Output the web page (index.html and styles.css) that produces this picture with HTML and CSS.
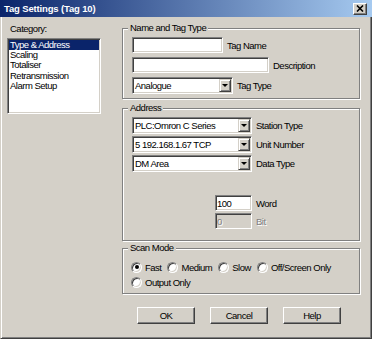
FILE: index.html
```html
<!DOCTYPE html>
<html lang="en">
<head>
  <meta charset="UTF-8"/>
  <meta name="viewport" content="width=device-width, initial-scale=1.0"/>
  <title>Tag Settings</title>
  <link rel="stylesheet" href="styles.css">
</head>
<body>

  <div class="window">

    <!-- title bar -->
    <div class="titlebar">
      <span class="title">Tag Settings (Tag 10)</span>
      <button class="close" type="button">
        <svg width="8" height="7" viewBox="0 0 8 7"><path d="M1 0.5 L7 6.5 M7 0.5 L1 6.5" stroke="#000" stroke-width="1.6" fill="none"/></svg>
      </button>
    </div>

    <div class="frame">

      <!-- left: category list -->
      <div class="category">
        <div class="category-label">Category:</div>
        <ul class="listbox">
          <li class="selected">Type &amp; Address</li>
          <li>Scaling</li>
          <li>Totaliser</li>
          <li>Retransmission</li>
          <li>Alarm Setup</li>
        </ul>
      </div>

      <!-- right: settings page -->
      <div class="panel">

        <fieldset class="group group-name">
          <legend>Name and Tag Type</legend>
          <div class="rows">
            <div class="row">
              <input class="edit edit-name" type="text" value="">
              <span>Tag Name</span>
            </div>
            <div class="row">
              <input class="edit edit-desc" type="text" value="">
              <span>Description</span>
            </div>
            <div class="row">
              <div class="combo combo-type"><span class="combo-text">Analogue</span><span class="combo-arrow"></span></div>
              <span>Tag Type</span>
            </div>
          </div>
        </fieldset>

        <fieldset class="group group-address">
          <legend>Address</legend>
          <div class="rows tight">
            <div class="row">
              <div class="combo combo-wide"><span class="combo-text">PLC:Omron C Series</span><span class="combo-arrow"></span></div>
              <span>Station Type</span>
            </div>
            <div class="row">
              <div class="combo combo-wide"><span class="combo-text">5 192.168.1.67 TCP</span><span class="combo-arrow"></span></div>
              <span>Unit Number</span>
            </div>
            <div class="row">
              <div class="combo combo-wide"><span class="combo-text">DM Area</span><span class="combo-arrow"></span></div>
              <span>Data Type</span>
            </div>
            <div class="row row-word">
              <input class="edit edit-small" type="text" value="100">
              <span>Word</span>
            </div>
            <div class="row">
              <input class="edit edit-small" type="text" value="0" disabled>
              <span class="disabled">Bit</span>
            </div>
          </div>
        </fieldset>

        <fieldset class="group group-scan">
          <legend>Scan Mode</legend>
          <div class="radios">
            <div class="radio-row">
              <label class="radio-item"><span class="radio checked"></span>Fast</label>
              <label class="radio-item"><span class="radio"></span>Medium</label>
              <label class="radio-item"><span class="radio"></span>Slow</label>
              <label class="radio-item"><span class="radio"></span>Off/Screen Only</label>
            </div>
            <div class="radio-row">
              <label class="radio-item"><span class="radio"></span>Output Only</label>
            </div>
          </div>
        </fieldset>

        <div class="buttons">
          <button class="btn" type="button">OK</button>
          <button class="btn" type="button">Cancel</button>
          <button class="btn" type="button">Help</button>
        </div>

      </div>
    </div>
  </div>

</body>
</html>
```

FILE: styles.css
```css
* {
  margin: 0; padding: 0;
  box-sizing: border-box;
}

body {
  font-family: "Liberation Sans", Arial, sans-serif;
  font-size: 9.5px;
  letter-spacing: -0.5px;
  color: #000;
  background: #d4d0c8;
}

.window {
  width: 372px;
  height: 339px;
  display: flex;
  flex-direction: column;
  background: #d4d0c8;
}

/* title bar */
.titlebar {
  height: 17px;
  flex: none;
  display: flex;
  align-items: center;
  justify-content: space-between;
  padding: 0 5px 0 4px;
  background: linear-gradient(to right, #0a246a, #a6caf0);
}

.title {
  color: #fff;
  font-weight: bold;
  letter-spacing: -0.15px;
}

.close {
  width: 14px;
  height: 12px;
  display: flex;
  align-items: center;
  justify-content: center;
  background: #d4d0c8;
  border: 1px solid;
  border-color: #fff #404040 #404040 #fff;
  box-shadow: inset -1px -1px #808080;
}

/* window body */
.frame {
  flex: 1;
  display: flex;
  padding: 5px 0 0 6px;
  border-style: solid;
  border-width: 0 1px 1px 1px;
  border-color: #d4d0c8 #404040 #404040 #d4d0c8;
  box-shadow: inset 1px 0 #fff, inset -1px -1px #808080;
}

.category {
  width: 94px;
  flex: none;
}

.category-label {
  line-height: 12px;
  margin: 1px 0 0 3px;
}

.listbox {
  list-style: none;
  height: 76px;
  margin-top: 3px;
  background: #fff;
  border: 1px solid;
  border-color: #808080 #fff #fff #808080;
  box-shadow: inset 1px 1px #404040, inset -1px -1px #d4d0c8;
  padding: 1px;
}

.listbox li {
  line-height: 10.2px;
  padding-left: 1px;
  white-space: nowrap;
}

.listbox li.selected {
  background: #0a246a;
  color: #fff;
}

.panel {
  margin-left: 21px;
  width: 238px;
}

/* group boxes */
.group {
  border: 1px solid #808080;
  box-shadow: inset 1px 1px #fff, 1px 1px #fff;
  padding: 3px 4px 4px 5px;
  min-width: 0;
}

.group legend {
  line-height: 12px;
  padding: 0 2px;
  background: #d4d0c8;
}

.group-address {
  margin-top: 3px;
  padding-bottom: 11px;
}

.group-scan {
  margin-top: 1px;
  padding-top: 6px;
}

.rows {
  margin-left: 4px;
  display: flex;
  flex-direction: column;
  gap: 4px;
}

.rows.tight { gap: 2px; }

.row {
  display: flex;
  align-items: center;
  gap: 4px;
  white-space: nowrap;
}

.row-word { margin-top: 21px; }

/* edit boxes and combos */
.edit {
  height: 16px;
  font: inherit;
  letter-spacing: inherit;
  padding: 0 1px;
  background: #fff;
  border: 1px solid;
  border-color: #808080 #fff #fff #808080;
  box-shadow: inset 1px 1px #404040, inset -1px -1px #d4d0c8;
  outline: none;
}

.edit-name { width: 91px; }
.edit-desc { width: 137px; }
.edit-small { width: 37px; margin-left: 83px; }

.edit:disabled {
  background: #d4d0c8;
  color: #808080;
  text-shadow: 1px 1px #fff;
}

.disabled {
  color: #808080;
  text-shadow: 1px 1px #fff;
}

.combo {
  height: 17px;
  display: flex;
  background: #fff;
  border: 1px solid;
  border-color: #808080 #fff #fff #808080;
  box-shadow: inset 1px 1px #404040, inset -1px -1px #d4d0c8;
  padding: 1px;
}

.combo-type { width: 101px; }
.combo-wide { width: 120px; }

.combo-text {
  flex: 1;
  line-height: 13px;
  padding-left: 1px;
}

.combo-arrow {
  width: 12px;
  height: 13px;
  display: flex;
  align-items: center;
  justify-content: center;
  background: #d4d0c8;
  border: 1px solid;
  border-color: #d4d0c8 #404040 #404040 #d4d0c8;
  box-shadow: inset 1px 1px #fff, inset -1px -1px #808080;
}

.combo-arrow::after {
  content: "";
  border-top: 3px solid #000;
  border-left: 3px solid transparent;
  border-right: 3px solid transparent;
}

/* radio buttons */
.radios {
  margin-left: 3px;
  display: flex;
  flex-direction: column;
  gap: 1px;
}

.radio-row {
  display: flex;
  gap: 6px;
}

.radio-item {
  height: 14px;
  display: flex;
  align-items: center;
  gap: 3px;
  white-space: nowrap;
}

.radio {
  width: 11px;
  height: 11px;
  border-radius: 50%;
  background: #fff;
  border: 1px solid;
  border-color: #808080 #fff #fff #808080;
  box-shadow: inset 1px 1px #404040, inset -1px -1px #d4d0c8;
  display: flex;
  align-items: center;
  justify-content: center;
}

.radio.checked::after {
  content: "";
  width: 4px;
  height: 4px;
  border-radius: 50%;
  background: #000;
}

/* buttons */
.buttons {
  margin-top: 13px;
  padding-left: 15px;
  display: flex;
  gap: 15px;
}

.btn {
  width: 58px;
  height: 17px;
  font: inherit;
  letter-spacing: inherit;
  color: #000;
  background: #d4d0c8;
  border: 1px solid;
  border-color: #fff #404040 #404040 #fff;
  box-shadow: inset -1px -1px #808080;
}
```
